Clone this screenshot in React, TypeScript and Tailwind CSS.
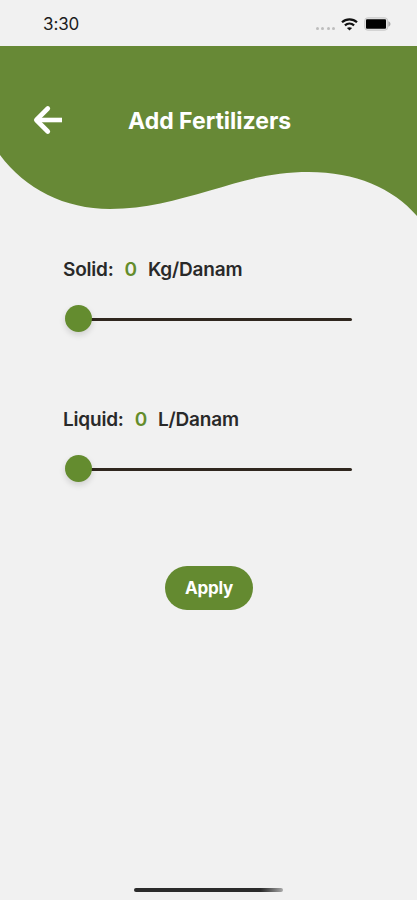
import { useState } from 'react';

interface AmountSliderProps {
  label: string;
  unit: string;
  max: number;
}

function StatusBar() {
  return (
    <div className="flex h-[46px] items-start justify-between pl-[43px] pr-[26px]">
      <span className="mt-[12px] text-[17px] leading-6 tracking-[-0.1px] text-[#1c1c1c]">3:30</span>
      <div className="mt-[17px] flex items-start">
        <div className="mr-[6px] mt-[9.500px] flex gap-[2.5px]">
          {[0, 1, 2, 3].map((dot) => (
            <span key={dot} className="size-[3px] rounded-full bg-[#bdbdbd]" />
          ))}
        </div>
        <svg width="17" height="14" viewBox="0 0 17 14" fill="none" stroke="#111" strokeWidth="2.2">
          <path d="M1 5.2C5.2 1.3 11.8 1.3 16 5.2" />
          <path d="M3.9 8.4C6.6 6 10.4 6 13.1 8.4" />
          <path d="M8.5 13.6L5.9 11.1C7.4 9.8 9.6 9.8 11.1 11.1Z" fill="#111" stroke="none" />
        </svg>
        <svg className="ml-[6px]" width="27" height="14" viewBox="0 0 27 14">
          <rect x="0.7" y="0.8" width="23" height="12.4" rx="3" fill="#e4e4e4" stroke="#c8c8c8" strokeWidth="1" />
          <rect x="2" y="2.2" width="20" height="9.6" rx="1" fill="#000" />
          <path d="M24.4 4.2C27.2 5.5 27.2 8.5 24.4 9.8Z" fill="#aaa" />
        </svg>
      </div>
    </div>
  );
}

function Header() {
  return (
    <header className="relative h-[171px]">
      <svg className="absolute inset-0" width="417" height="171" viewBox="0 0 417 171">
        <path
          d="M0 0H417V170C393 142 355 126 309 126C270 126 242 135 210 144.500C175 154.500 146 163 110 163C65 163 25 143 0 109Z"
          fill="#678936"
        />
      </svg>
      <div className="relative flex items-center pt-[57px]">
        <button className="-mt-[2px] ml-[33px]" aria-label="Back">
          <svg width="30" height="30" viewBox="0 0 30 30" fill="none" stroke="#fff" strokeWidth="4.6">
            <path d="M14.800 3.500L3.300 15L14.800 26.500" strokeLinecap="round" strokeLinejoin="round" />
            <path d="M4 15H29" />
          </svg>
        </button>
        <h1 className="ml-[65px] whitespace-nowrap text-[23px] font-bold leading-9 text-white">
          Add Fertilizers
        </h1>
      </div>
    </header>
  );
}

function AmountSlider({ label, unit, max }: AmountSliderProps) {
  const [value, setValue] = useState(0);

  return (
    <section className="h-[150px] pl-[63px] pr-[65px]">
      <p className="whitespace-pre text-[19px] font-semibold leading-7 tracking-[-0.2px] text-[#292929]">
        {label}:<span className="mx-[11px] text-[#648c2b]">{value}</span>
        {unit}
      </p>
      <div className="relative mt-[20px] h-7">
        <div className="absolute left-2 right-0 top-[14px] h-[3px] rounded-full bg-[#30271f]" />
        <div
          className="absolute top-[0.500px] ml-[1.500px] size-[27px] rounded-full bg-[#648c2f] shadow-[0_3px_6px_rgba(0,0,0,0.14)]"
          style={{ left: `${(value / max) * 90}%` }}
        />
        <input
          type="range"
          min={0}
          max={max}
          value={value}
          aria-label={label}
          onChange={(e) => setValue(Number(e.target.value))}
          className="absolute inset-0 w-full cursor-pointer opacity-0"
        />
      </div>
    </section>
  );
}

export default function App() {
  return (
    <div className="flex h-[900px] w-[417px] flex-col overflow-hidden bg-[#f1f1f1] font-['Inter',sans-serif]">
      <StatusBar />
      <Header />
      <main className="flex flex-1 flex-col pt-[39px]">
        <AmountSlider label="Solid" unit="Kg/Danam" max={100} />
        <AmountSlider label="Liquid" unit="L/Danam" max={100} />
        <button className="ml-[165px] mt-[10px] h-[44px] w-[88px] rounded-full bg-[#648a30] pt-[2px] text-[17px] font-bold tracking-[-0.2px] text-white">
          Apply
        </button>
      </main>
      <div className="mx-auto mb-[8px] h-[4px] w-[149px] rounded-full bg-linear-to-r from-[#2b2b2b] from-85% to-[#aaaaaa]" />
    </div>
  );
}
